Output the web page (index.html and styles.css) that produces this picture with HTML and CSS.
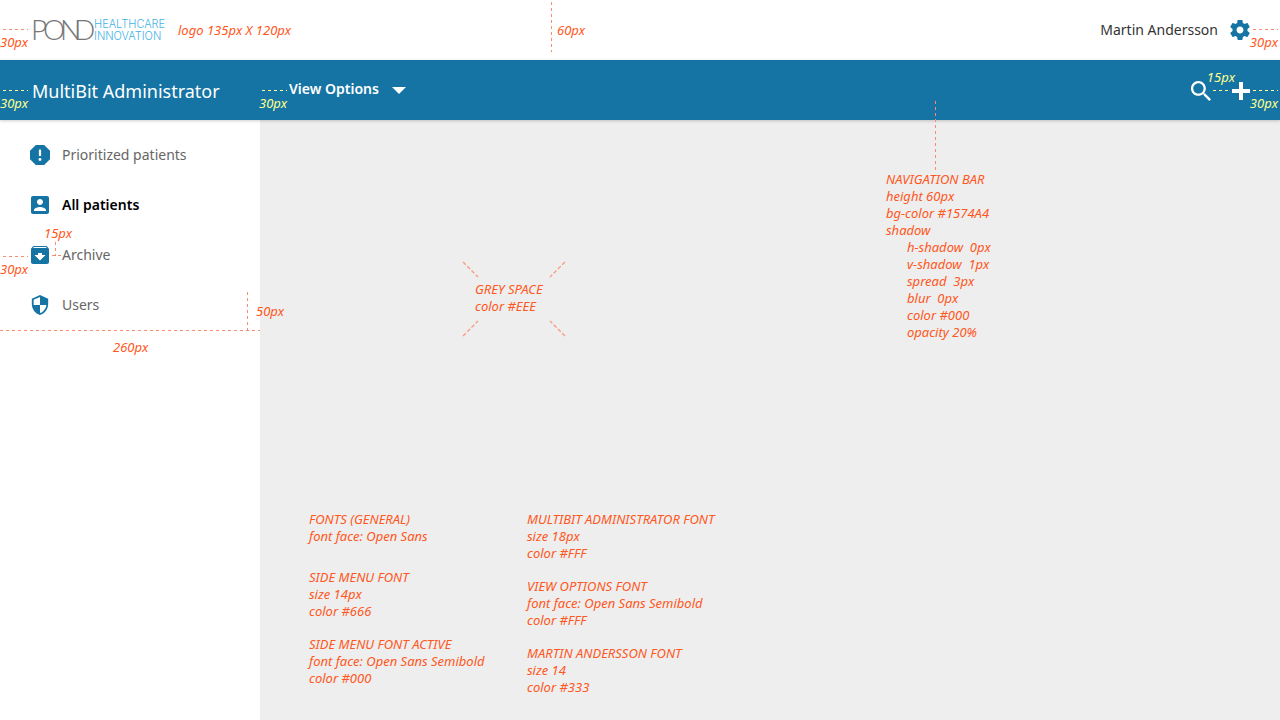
FILE: index.html
```html
<!DOCTYPE html>
<html lang="en">
<head>
<meta charset="utf-8">
<meta name="viewport" content="width=device-width, initial-scale=1">
<title>MultiBit Administrator</title>
<link rel="stylesheet" href="styles.css">
</head>
<body class="page">
<header class="topbar">
  <div class="brand">
    <svg class="logo" viewBox="0 0 136 24" role="img" aria-label="POND Healthcare Innovation">
      <text class="logo-name" x="-2 10 27 41" y="22">POND</text>
      <text class="logo-tag" x="61" y="10">HEALTHCARE</text>
      <text class="logo-tag" x="61" y="22">INNOVATION</text>
    </svg>
    <span class="note">logo 135px X 120px</span>
  </div>
  <div class="account">
    <span class="user-name">Martin Andersson</span>
    <button class="icon-button" aria-label="Settings">
      <svg class="icon-20 blue" viewBox="2 2 20 20"><path d="M19.43 12.98c.04-.32.07-.64.07-.98s-.03-.66-.07-.98l2.11-1.65c.19-.15.24-.42.12-.64l-2-3.46c-.12-.22-.39-.3-.61-.22l-2.49 1c-.52-.4-1.08-.73-1.69-.98l-.38-2.65C14.46 2.18 14.25 2 14 2h-4c-.25 0-.46.18-.49.42l-.38 2.65c-.61.25-1.17.59-1.69.98l-2.49-1c-.23-.09-.49 0-.61.22l-2 3.46c-.13.22-.07.49.12.64l2.11 1.65c-.04.32-.07.65-.07.98s.03.66.07.98l-2.11 1.65c-.19.15-.24.42-.12.64l2 3.46c.12.22.39.3.61.22l2.49-1c.52.4 1.08.73 1.69.98l.38 2.65c.03.24.24.42.49.42h4c.25 0 .46-.18.49-.42l.38-2.65c.61-.25 1.17-.59 1.69-.98l2.49 1c.23.09.49 0 .61-.22l2-3.46c.12-.22.07-.49-.12-.64l-2.11-1.65zM12 15.5c-1.93 0-3.5-1.57-3.5-3.5s1.57-3.5 3.5-3.5 3.5 1.57 3.5 3.5-1.57 3.5-3.5 3.5z"/></svg>
    </button>
  </div>
  <i class="rule across at-left"></i><span class="note size-left">30px</span>
  <i class="rule down header-rule"></i><span class="note header-size">60px</span>
  <i class="rule across at-right"></i><span class="note size-right">30px</span>
</header>

<div class="navbar">
  <h1 class="app-title">MultiBit Administrator</h1>
  <button class="view-options">View Options
    <svg class="caret" viewBox="0 0 14 7"><path d="M0 0h14L7 7z"/></svg>
  </button>
  <div class="actions">
    <button class="icon-button" aria-label="Search">
      <svg class="icon-20" viewBox="3 3 17.5 17.5"><path d="M15.5 14h-.79l-.28-.27C15.41 12.59 16 11.11 16 9.5 16 5.91 13.09 3 9.5 3S3 5.91 3 9.5 5.91 16 9.5 16c1.61 0 3.09-.59 4.23-1.57l.27.28v.79l5 4.99L20.49 19l-4.99-5zm-6 0C7.01 14 5 11.99 5 9.5S7.01 5 9.5 5 14 7.01 14 9.5 11.99 14 9.5 14z"/></svg>
    </button>
    <button class="icon-button" aria-label="Add">
      <svg class="icon-18" viewBox="0 0 18 18"><path d="M7 0h4v7h7v4h-7v7H7v-7H0V7h7z"/></svg>
    </button>
  </div>
  <i class="rule across pale at-left"></i><span class="note pale-note size-left">30px</span>
  <i class="rule across pale options-rule"></i><span class="note pale-note options-size">30px</span>
  <i class="rule across pale gap-rule"></i><span class="note pale-note gap-size">15px</span>
  <i class="rule across pale at-right"></i><span class="note pale-note size-right">30px</span>
  <i class="rule down nav-rule"></i>
</div>

<div class="body">
  <nav class="sidebar" aria-label="Patients">
    <a class="item" href="#prioritized"><span class="slot"><svg class="icon-20 blue" viewBox="3 3 18 18"><path d="M15.73 3H8.27L3 8.27v7.46L8.27 21h7.46L21 15.73V8.27L15.73 3zM12 17.3c-.72 0-1.3-.58-1.3-1.3s.58-1.3 1.3-1.3 1.3.58 1.3 1.3-.58 1.3-1.3 1.3zm1-4.3h-2V7h2v6z"/></svg></span>Prioritized patients</a>
    <a class="item active" href="#all" aria-current="page"><span class="slot"><svg class="icon-18 blue" viewBox="3 3 18 18"><path d="M3 5v14c0 1.1.89 2 2 2h14c1.1 0 2-.9 2-2V5c0-1.1-.9-2-2-2H5c-1.11 0-2 .9-2 2zm12 4c0 1.66-1.34 3-3 3s-3-1.34-3-3 1.34-3 3-3 3 1.34 3 3zm-9 8c0-2 4-3.1 6-3.1s6 1.1 6 3.1v1H6v-1z"/></svg></span>All patients</a>
    <a class="item" href="#archive"><span class="slot"><svg class="icon-18 blue" viewBox="3 3 18 18"><path d="M20.54 5.23l-1.39-1.68C18.88 3.21 18.47 3 18 3H6c-.47 0-.88.21-1.16.55L3.46 5.23C3.17 5.57 3 6.02 3 6.5V19c0 1.1.9 2 2 2h14c1.1 0 2-.9 2-2V6.5c0-.48-.17-.93-.46-1.27zM12 17.5L6.5 12H10v-2h4v2h3.5L12 17.5zM5.12 5l.81-1h12l.94 1H5.12z"/></svg></span>Archive</a>
    <a class="item" href="#users"><span class="slot"><svg class="icon-20 blue" viewBox="1 1 22 22"><path d="M12 1L3 5v6c0 5.55 3.84 10.74 9 12 5.16-1.26 9-6.45 9-12V5l-9-4zm0 10.99h7c-.53 4.12-3.28 7.79-7 8.94V12H5V6.3l7-3.11v8.8z"/></svg></span>Users</a>
    <i class="rule across archive-rule"></i><span class="note archive-size">30px</span>
    <i class="rule across icon-gap"></i><i class="rule down icon-gap-stem"></i><span class="note icon-gap-size">15px</span>
    <i class="rule down row-rule"></i><span class="note row-size">50px</span>
    <i class="rule across width-rule"></i><span class="note width-size">260px</span>
  </nav>

  <main class="content">
    <section class="upper">
      <div class="grey-space">
        <svg class="rays" viewBox="0 0 104 76"><path d="M1 1l15 15M103 1L88 16M1 75l15-15M103 75L88 60"/></svg>
        <p class="note">GREY SPACE<br>color #EEE</p>
      </div>
      <div class="note nav-spec">
        <p>NAVIGATION BAR<br>height 60px<br>bg-color #1574A4<br>shadow</p>
        <p class="indent">h-shadow&nbsp; 0px<br>v-shadow&nbsp; 1px<br>spread&nbsp; 3px<br>blur&nbsp; 0px<br>color #000<br>opacity 20%</p>
      </div>
    </section>
    <section class="note fonts">
      <div class="fonts-column">
        <p class="general">FONTS (GENERAL)<br>font face: Open Sans</p>
        <p>SIDE MENU FONT<br>size 14px<br>color #666</p>
        <p>SIDE MENU FONT ACTIVE<br>font face: Open Sans Semibold<br>color #000</p>
      </div>
      <div class="fonts-column">
        <p>MULTIBIT ADMINISTRATOR FONT<br>size 18px<br>color #FFF</p>
        <p>VIEW OPTIONS FONT<br>font face: Open Sans Semibold<br>color #FFF</p>
        <p>MARTIN ANDERSSON FONT<br>size 14<br>color #333</p>
      </div>
    </section>
  </main>
</div>
</body>
</html>
```

FILE: styles.css
```css
* { box-sizing: border-box; }

.page {
  margin: 0;
  min-height: 100vh;
  display: flex;
  flex-direction: column;
  background: #fff;
  color: #333;
  font: 14px/20px "Noto Sans", "Open Sans", sans-serif;
}

p { margin: 0; }
svg { display: block; fill: currentColor; }
button { border: 0; padding: 0; background: none; color: inherit; font: inherit; cursor: pointer; }

.icon-20 { width: 20px; height: 20px; }
.icon-18 { width: 18px; height: 18px; }
.blue { color: #1574a4; }

/* Top bar */
.topbar {
  position: relative;
  height: 60px;
  padding: 0 30px 0 33px;
  display: flex;
  align-items: center;
  justify-content: space-between;
}
.brand { display: flex; align-items: center; gap: 9px; }
.logo { width: 136px; height: 24px; overflow: visible; }
.logo-name { font: 300 28px Lato, sans-serif; fill: #777; }
.logo-tag { font: 300 11px Inter, sans-serif; fill: #3fb4e5; }
.account { display: flex; align-items: center; gap: 12px; }

/* Navigation bar */
.navbar {
  position: relative;
  z-index: 1;
  height: 60px;
  padding: 0 30px 0 32px;
  display: flex;
  align-items: center;
  background: #1574a4;
  color: #fff;
  box-shadow: 0 1px 3px rgba(0, 0, 0, 0.2);
}
.app-title { width: 257px; margin: 0; padding-top: 2px; font-size: 18px; font-weight: 400; line-height: 24px; }
.view-options { display: flex; align-items: center; gap: 13px; font-weight: 600; padding-bottom: 2px; }
.caret { width: 14px; height: 7px; margin-top: 3px; }
.actions { margin-left: auto; display: flex; align-items: center; gap: 21px; padding-top: 2px; }

/* Side menu */
.body { flex: 1; display: flex; }
.sidebar { position: relative; width: 260px; flex: none; padding-top: 10px; }
.item {
  height: 50px;
  padding-left: 30px;
  display: flex;
  align-items: center;
  gap: 12px;
  color: #666;
  text-decoration: none;
}
.active { color: #000; font-weight: 600; }
.slot { width: 20px; display: flex; justify-content: center; }

/* Content */
.content { flex: 1; padding: 51px 49px 20px; background: #eee; }
.upper { display: flex; align-items: center; min-height: 170px; padding-left: 153px; }
.grey-space { position: relative; width: 104px; height: 76px; padding: 20px 0 0 13px; margin-top: 86px; white-space: nowrap; }
.rays { position: absolute; inset: 0; fill: none; stroke: #fa9a80; stroke-width: 1.3; stroke-dasharray: 4 2; }
.nav-spec { margin-left: 320px; }
.indent { padding-left: 21px; }
.fonts { display: flex; gap: 36px; margin-top: 170px; }
.fonts-column { display: flex; flex-direction: column; gap: 16px; width: 182px; }
.fonts-column .general { margin-bottom: 8px; }

/* Dimension notes */
.note { color: #ff5722; font: italic 13px/17px "Noto Sans", "Open Sans", sans-serif; white-space: nowrap; }
.pale-note { color: #ffff8d; }
.rule { position: absolute; color: #f98c70; }
.across { height: 1px; width: 25px; background: repeating-linear-gradient(90deg, currentColor 0 3px, transparent 3px 6px); }
.down { width: 1px; background: repeating-linear-gradient(currentColor 0 3px, transparent 3px 6px); }
.pale { color: #ffff8d; }
.at-left { left: 3px; top: 29px; }
.at-right { right: 2px; top: 29px; }
.navbar .across { top: 30px; }
.size-left { position: absolute; left: 0; top: 34px; }
.navbar .size-left { top: 35px; }
.size-right { position: absolute; right: 2px; top: 34px; }
.navbar .size-right { top: 35px; }
.header-rule { left: 551px; top: 2px; height: 50px; }
.header-size { position: absolute; left: 557px; top: 22px; }
.options-rule { left: 262px; }
.options-size { position: absolute; left: 259px; top: 35px; }
.navbar .gap-rule { right: 52px; width: 15px; }
.gap-size { position: absolute; right: 45px; top: 9px; }
.nav-rule { left: 935px; top: 41px; height: 69px; }
.archive-rule { left: 3px; top: 136px; }
.archive-size { position: absolute; left: 0; top: 141px; }
.sidebar .icon-gap { left: 52px; top: 135px; width: 9px; }
.icon-gap-stem { left: 55px; top: 122px; height: 14px; }
.icon-gap-size { position: absolute; left: 44px; top: 105px; }
.row-rule { left: 247px; top: 172px; height: 38px; }
.row-size { position: absolute; z-index: 1; left: 256px; top: 183px; }
.sidebar .width-rule { left: 0; top: 210px; width: 100%; }
.width-size { position: absolute; left: 113px; top: 219px; }
```
